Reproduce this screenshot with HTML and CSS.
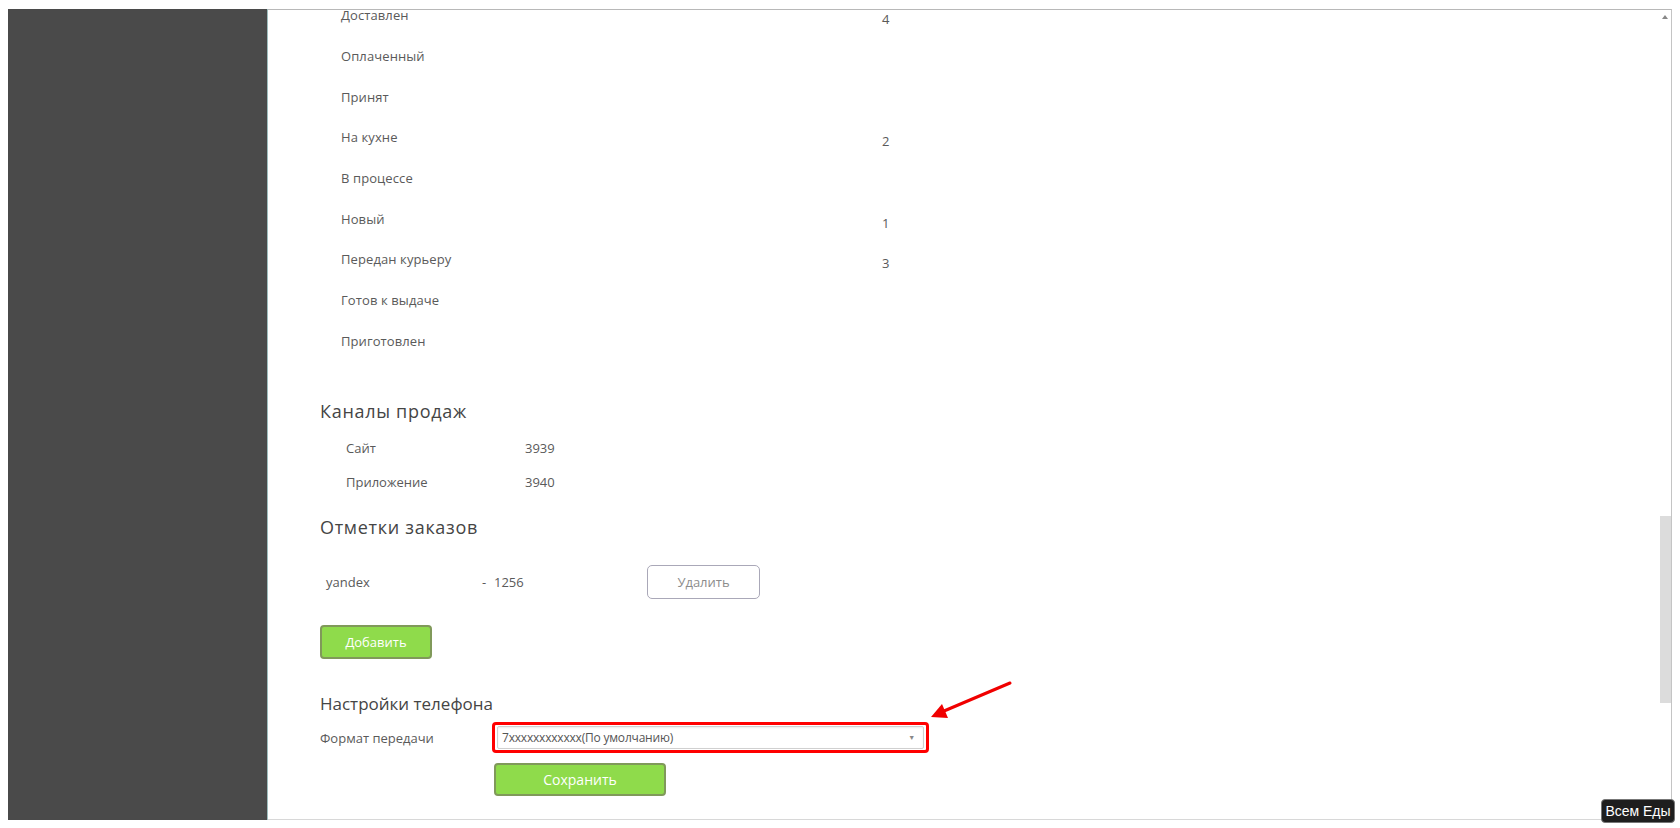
FILE: index.html
```html
<!DOCTYPE html>
<html lang="ru">
<head>
    <meta charset="utf-8">
    <title>Настройки</title>
    <link rel="stylesheet" href="styles.css">
</head>
<body>
    <div class="frame">
        <aside class="sidebar"></aside>
        <main class="page">
            <div class="content">
                <ul class="status-list">
                    <li class="status-row"><span class="status-name">Доставлен</span><span class="status-count">4</span></li>
                    <li class="status-row"><span class="status-name">Оплаченный</span></li>
                    <li class="status-row"><span class="status-name">Принят</span></li>
                    <li class="status-row"><span class="status-name">На кухне</span><span class="status-count">2</span></li>
                    <li class="status-row"><span class="status-name">В процессе</span></li>
                    <li class="status-row"><span class="status-name">Новый</span><span class="status-count">1</span></li>
                    <li class="status-row"><span class="status-name">Передан курьеру</span><span class="status-count">3</span></li>
                    <li class="status-row"><span class="status-name">Готов к выдаче</span></li>
                    <li class="status-row"><span class="status-name">Приготовлен</span></li>
                </ul>

                <section class="channels">
                    <h2 class="section-title">Каналы продаж</h2>
                    <div class="channel-row"><span class="channel-name">Сайт</span><span>3939</span></div>
                    <div class="channel-row"><span class="channel-name">Приложение</span><span>3940</span></div>
                </section>

                <section class="marks">
                    <h2 class="section-title">Отметки заказов</h2>
                    <div class="mark-row">
                        <span class="mark-name">yandex</span>
                        <span class="mark-dash">-</span>
                        <span class="mark-value">1256</span>
                        <button class="btn-outline">Удалить</button>
                    </div>
                    <button class="btn-green btn-add">Добавить</button>
                </section>

                <section class="phone">
                    <h2 class="section-title">Настройки телефона</h2>
                    <div class="phone-row">
                        <span class="phone-label">Формат передачи</span>
                        <div class="highlight">
                            <div class="select">
                                <span>7xxxxxxxxxxxx(По умолчанию)</span>
                                <span class="select-arrow">&#9660;</span>
                            </div>
                        </div>
                    </div>
                    <button class="btn-green btn-save">Сохранить</button>
                </section>

                <svg class="pointer" width="100" height="55" viewBox="0 0 100 55">
                    <line x1="87" y1="8" x2="21" y2="36" stroke="#f00000" stroke-width="3" stroke-linecap="round"/>
                    <polygon points="8,42 25,43 19,29" fill="#f00000"/>
                </svg>
            </div>
            <div class="scrollbar">
                <span class="scroll-up"></span>
                <div class="scroll-thumb"></div>
            </div>
        </main>
    </div>
    <div class="brand-badge">Всем Еды</div>
</body>
</html>
```

FILE: styles.css
```css
body {
    margin: 0;
    padding: 0;
    background: #ffffff;
    font-family: "Open Sans", "Noto Sans", sans-serif;
    color: #5a5a5a;
}
.frame {
    display: flex;
    width: 1664px;
    height: 811px;
    margin: 9px 0 0 8px;
}
.sidebar {
    width: 259px;
    background: #4a4a4a;
    border-right: 1px solid #9dbdbd;
}
.page {
    flex: 1;
    display: flex;
    position: relative;
    border-top: 1px solid #b8b8b8;
    border-right: 1px solid #c4c4c4;
    border-bottom: 1px solid #d8d8d8;
    overflow: hidden;
}
.content {
    flex: 1;
    position: relative;
    padding-left: 52px;
}

/* statuses */
.status-list {
    list-style: none;
    margin: -15px 0 0;
    padding: 0;
}
.status-row {
    display: flex;
    align-items: center;
    height: 40.7px;
    padding-left: 21px;
    font-size: 13px;
    letter-spacing: 0.1px;
}
.status-name {
    width: 541px;
}
.status-count {
    padding-top: 8px;
}

/* section titles */
.section-title {
    margin: 0;
    font-size: 18px;
    line-height: 24px;
    font-weight: 400;
    letter-spacing: 0.7px;
    color: #454545;
}
.channels {
    margin-top: 38px;
}
.channel-row {
    display: flex;
    align-items: center;
    height: 34px;
    padding-left: 26px;
    font-size: 13px;
}
.channels .section-title {
    margin-bottom: 8px;
}
.channel-name {
    width: 179px;
}

/* marks */
.marks {
    margin-top: 16px;
}
.marks .section-title {
    margin-bottom: 26px;
}
.mark-row {
    display: flex;
    align-items: center;
    height: 34px;
    padding-left: 6px;
    font-size: 13px;
}
.mark-name {
    width: 156px;
}
.mark-dash {
    width: 12px;
}
.mark-value {
    width: 153px;
}
.btn-outline {
    width: 113px;
    height: 34px;
    background: #ffffff;
    border: 1px solid #aaa8b8;
    border-radius: 5px;
    color: #8c8c8c;
    font-family: inherit;
    font-size: 13px;
}
.btn-green {
    display: block;
    background: #8fdb4b;
    border: 2px solid #80995a;
    border-radius: 4px;
    color: #ffffff;
    font-family: inherit;
    font-size: 13px;
}
.btn-add {
    width: 112px;
    height: 34px;
    margin-top: 26px;
}

/* phone */
.phone {
    margin-top: 33px;
}
.phone .section-title {
    margin-bottom: 6px;
    font-size: 17px;
    letter-spacing: 0;
}
.phone-row {
    display: flex;
    align-items: center;
    font-size: 13px;
}
.phone-label {
    width: 172px;
}
.highlight {
    width: 431px;
    height: 25px;
    border: 3px solid #ff0000;
    border-radius: 4px;
    display: flex;
    align-items: center;
    justify-content: center;
}
.select {
    width: 427px;
    height: 23px;
    box-sizing: border-box;
    border: 1px solid #d0d0d0;
    border-radius: 2px;
    box-shadow: inset 0 1px 2px rgba(0, 0, 0, 0.08);
    display: flex;
    align-items: center;
    justify-content: space-between;
    padding: 0 8px 0 4px;
    font-size: 12px;
    letter-spacing: -0.2px;
    color: #555;
}
.select-arrow {
    font-size: 7px;
    color: #888;
}
.btn-save {
    width: 172px;
    height: 33px;
    margin: 10px 0 0 174px;
    font-size: 14px;
}
.pointer {
    position: absolute;
    left: 655px;
    top: 665px;
}

/* scrollbar */
.scrollbar {
    width: 12px;
    display: flex;
    flex-direction: column;
    align-items: center;
}
.scroll-up {
    margin-top: 5px;
    width: 0;
    height: 0;
    border-left: 3px solid transparent;
    border-right: 3px solid transparent;
    border-bottom: 4px solid #888;
}
.scroll-thumb {
    width: 11px;
    height: 187px;
    margin-top: 497px;
    background: #dcdcdc;
}

.brand-badge {
    position: absolute;
    left: 1601px;
    top: 799px;
    width: 72px;
    height: 22px;
    line-height: 22px;
    text-align: center;
    background: #1e1e1e;
    border: 1px solid #777;
    border-radius: 4px;
    color: #ffffff;
    font-family: "Liberation Sans", Arial, sans-serif;
    font-size: 14px;
}
```
